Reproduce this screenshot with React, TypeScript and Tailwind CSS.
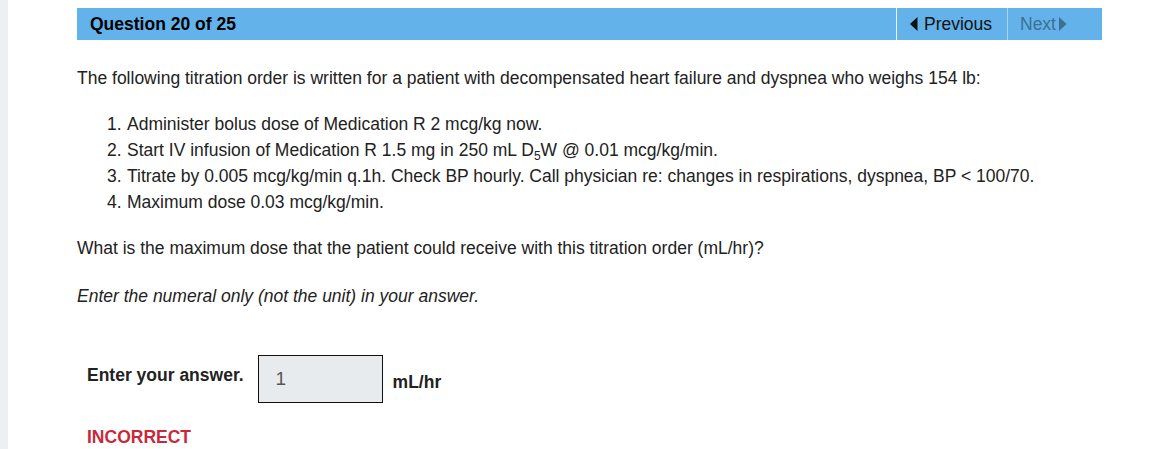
export default function App() {
  const steps = [
    <>Administer bolus dose of Medication R 2 mcg/kg now.</>,
    <>
      Start IV infusion of Medication R 1.5 mg in 250 mL D<span className="relative top-[4px] text-[12px] leading-none">5</span>W @ 0.01 mcg/kg/min.
    </>,
    <>Titrate by 0.005 mcg/kg/min q.1h. Check BP hourly. Call physician re: changes in respirations, dyspnea, BP &lt; 100/70.</>,
    <>Maximum dose 0.03 mcg/kg/min.</>,
  ];

  return (
    <div className="flex min-h-[449px] bg-white text-[17.5px] text-[#222] font-['Liberation_Sans',Arial,sans-serif]">
      <div className="w-2 shrink-0 bg-[#eeeff3]" />
      <div className="pl-[69px] pt-2">
        {/* Header */}
        <div className="flex h-8 w-[1025px] items-center bg-[#63b3ea]">
          <div className="flex-1 pl-[13px] font-bold text-black">Question 20 of 25</div>
          <div className="flex h-full w-[111px] items-center gap-[6px] border-l border-[#e8f3fc] pl-[13px] text-[#111]">
            <svg width="8" height="14" viewBox="0 0 8 14">
              <path d="M7.5 0 L0 7 L7.5 14 Z" fill="#111" />
            </svg>
            <span>Previous</span>
          </div>
          <div className="flex h-full w-[95px] items-center gap-[3px] border-l border-[#a9d3f3] pl-[12px] text-[#3d6f94]">
            <span>Next</span>
            <svg width="8" height="14" viewBox="0 0 8 14">
              <path d="M0 0 L7.5 7 L0 14 Z" fill="#3d6f94" />
            </svg>
          </div>
        </div>

        {/* Question body */}
        <p className="mt-[25px] leading-[26px]">
          The following titration order is written for a patient with decompensated heart failure and dyspnea who weighs 154 lb:
        </p>
        <div className="mt-5 pl-[30px]">
          {steps.map((s, i) => (
            <div key={i} className="flex leading-[26px]">
              <span className="w-5 shrink-0">{i + 1}.</span>
              <span>{s}</span>
            </div>
          ))}
        </div>
        <p className="mt-5 leading-[26px]">
          What is the maximum dose that the patient could receive with this titration order (mL/hr)?
        </p>
        <p className="mt-[22px] leading-[26px] italic">Enter the numeral only (not the unit) in your answer.</p>

        {/* Answer */}
        <div className="mt-[46px] flex items-start pl-[10px]">
          <span className="mt-[7px] font-bold">Enter your answer.</span>
          <div className="ml-[14px] flex h-[48px] w-[125px] items-center border border-[#111] bg-[#e8ebee] pl-[17px] text-[19px] text-[#555]">
            1
          </div>
          <span className="ml-[10px] mt-[14px] font-bold">mL/hr</span>
        </div>
        <div className="mt-[21px] pl-[10px] font-bold text-[#c9283a]">INCORRECT</div>
      </div>
    </div>
  );
}
